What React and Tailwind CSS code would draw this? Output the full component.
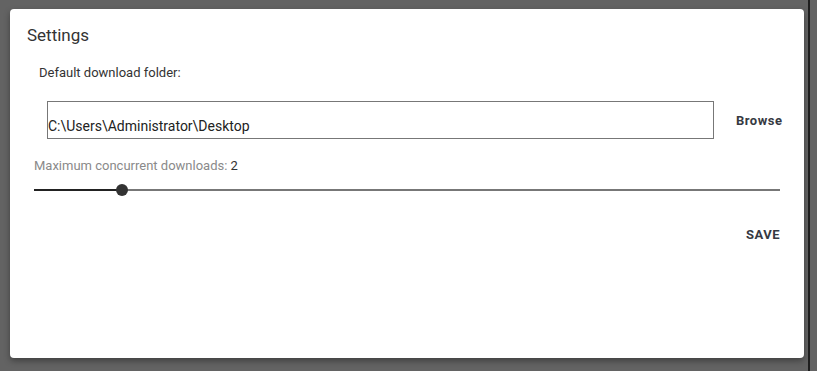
import React, { useState } from "react";

const App = () => {
  const [count] = useState(2);
  // thumb position along the 746px track
  const thumbLeft = Math.round((count / 17) * 746);

  return (
    <div className="relative w-[817px] h-[371px] overflow-hidden bg-[#636363] font-['Roboto',sans-serif] pt-[9px] pl-[10px]">
      <div className="w-[794px] h-[349px] rounded-[4px] bg-white shadow-[0_3px_6px_rgba(0,0,0,0.35)] flex flex-col">
        <div className="pl-[17px] pt-[14px] text-[17px] leading-[24px] text-[#333]">Settings</div>

        <div className="ml-[29px] mt-[17px] text-[13px] leading-[18px] text-[#333]">
          Default download folder:
        </div>

        <div className="flex items-center mt-[19px]">
          <div className="ml-[37px] w-[667px] h-[38px] border border-[#777] flex items-end pb-[2px] text-[14px] leading-[20px] text-[#222]">
            C:\Users\Administrator\Desktop
          </div>
          <button className="ml-[22px] pt-[2px] text-[13px] leading-[18px] font-bold tracking-[0.5px] text-[#363a42]">
            Browse
          </button>
        </div>

        <div className="ml-[24px] mt-[18px] text-[13px] leading-[18px] text-[#8a8a8a]">
          Maximum concurrent downloads: <span className="text-[#333]">{count}</span>
        </div>

        <div className="relative ml-[24px] mt-[9px] w-[746px] h-[12px] flex items-center">
          <div className="w-full h-[2px] bg-[#777]" />
          <div className="absolute left-0 h-[2px] bg-[#222]" style={{ width: thumbLeft }} />
          <div
            className="absolute w-[12px] h-[12px] rounded-full bg-[#333] -translate-x-1/2"
            style={{ left: thumbLeft }}
          />
        </div>

        <div className="flex justify-end mr-[24px] mt-[30px]">
          <button className="text-[13px] leading-[18px] font-bold tracking-[0.5px] text-[#363a42]">SAVE</button>
        </div>
      </div>
      <div className="absolute top-0 left-[808px] w-[2px] h-full bg-[#1e1e1e]" />
    </div>
  );
};

export default App;
